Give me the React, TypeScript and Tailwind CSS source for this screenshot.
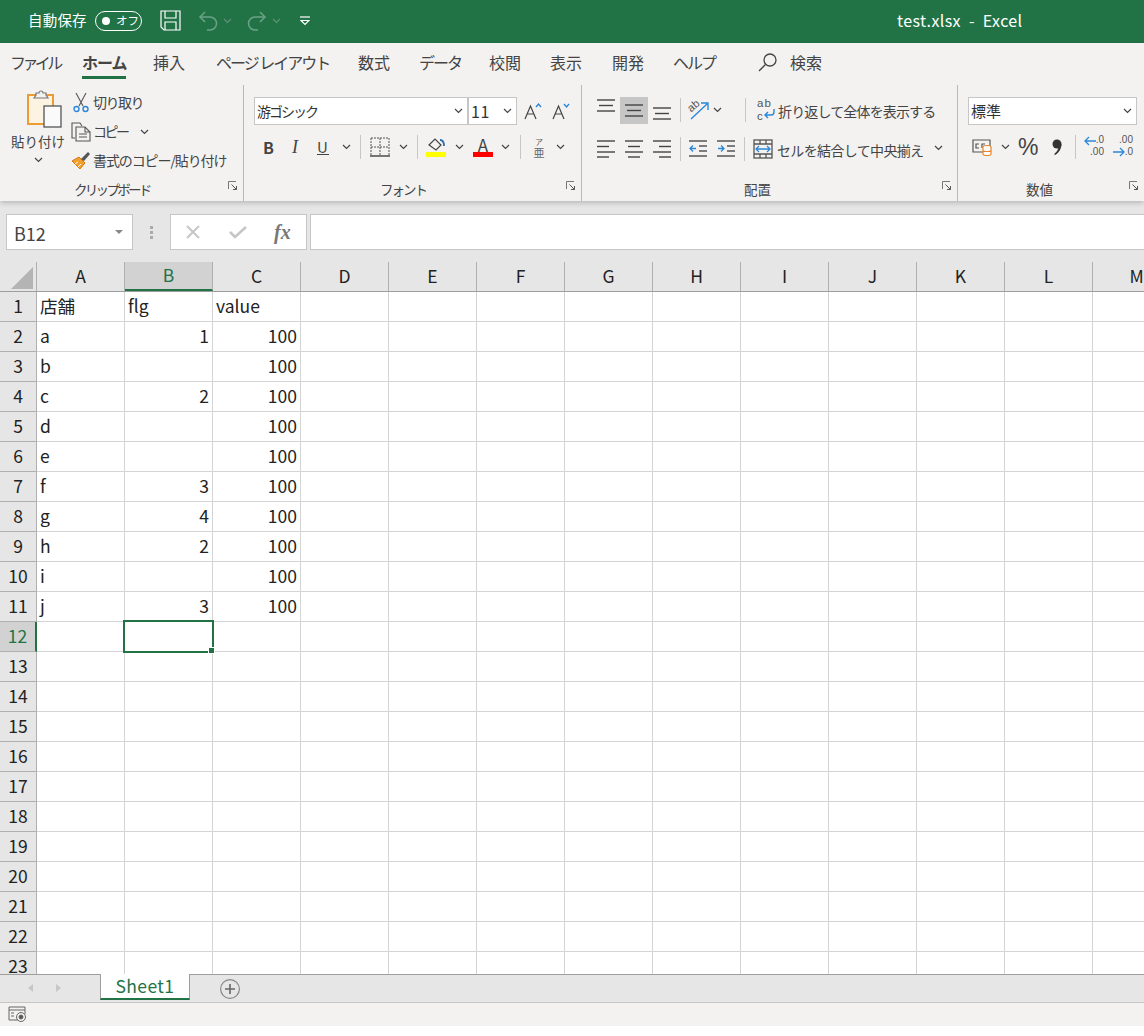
import React from 'react';

const font = { fontFamily: '"Noto Sans CJK JP", "Noto Sans", sans-serif' };
const decText = { fontFamily: '"Liberation Sans", sans-serif' };

const Chev = ({ className = '' }: { className?: string }) => (
    <svg width="9" height="6" viewBox="0 0 9 6" className={`shrink-0 ${className}`} fill="none" stroke="#444" strokeWidth="1.2">
        <path d="M1 1l3.5 3.5L8 1" />
    </svg>
);

const Sep = ({ className = '' }: { className?: string }) => <div className={`w-px bg-[#c6c6c6] shrink-0 ${className}`} />;

const Launcher = () => (
    <svg width="10" height="10" viewBox="0 0 10 10" className="absolute right-[5px] top-[2px]" fill="none" stroke="#777" strokeWidth="1">
        <path d="M.5 8V.5H8" />
        <path d="M3.5 3.5L8.5 8.5M5 8.5h3.5V5" stroke="#555" />
    </svg>
);

const Lines = ({ kind }: { kind: 'l' | 'c' | 'r' | 'f' }) => {
    const rows = kind === 'f'
        ? ['M0 2h18', 'M2 7.5h14', 'M0 13h18']
        : kind === 'l'
            ? ['M0 2h18', 'M0 7.5h12', 'M0 13h18', 'M0 18h12']
            : kind === 'c'
                ? ['M0 2h18', 'M3 7.5h12', 'M0 13h18', 'M3 18h12']
                : ['M0 2h18', 'M6 7.5h12', 'M0 13h18', 'M6 18h12'];
    return (
        <svg width="18" height="20" viewBox="0 0 18 20" className="shrink-0 block" fill="none" stroke="#444" strokeWidth="1.4">
            {rows.map((d) => <path key={d} d={d} />)}
        </svg>
    );
};

const TitleBar = () => (
    <div className="h-[43px] bg-[#217346] flex items-center text-white shrink-0 pl-[28px] pb-[2px]">
        <span className="text-[14.5px] w-[60px] whitespace-nowrap tracking-[0.2px] -mt-[2px]">自動保存</span>
        <div className="ml-[7px] w-[47px] h-[20px] rounded-full border border-white flex items-center pl-[6px]">
            <div className="w-[8px] h-[8px] rounded-full bg-white" />
            <span className="text-[11.5px] ml-[6px] leading-none">オフ</span>
        </div>
        <svg width="21" height="21" viewBox="0 0 21 21" className="ml-[18px]" fill="none" stroke="#fff" strokeWidth="1.2">
            <path d="M1 1h19v19H4l-3-3z" />
            <path d="M5 1v7h11V1M5 20v-8h11v8" />
        </svg>
        <svg width="21" height="20" viewBox="0 0 21 20" className="ml-[17px]" fill="none" stroke="#6ba288" strokeWidth="1.5">
            <path d="M7 1L2 6l5 5" />
            <path d="M2 6h10a6.5 6.5 0 0 1 0 13H9" />
        </svg>
        <Chev className="ml-[4px] opacity-40 invert" />
        <svg width="21" height="20" viewBox="0 0 21 20" className="ml-[14px]" fill="none" stroke="#6ba288" strokeWidth="1.5">
            <path d="M14 1l5 5-5 5" />
            <path d="M19 6H9a6.5 6.5 0 0 0 0 13h3" />
        </svg>
        <Chev className="ml-[5px] opacity-40 invert" />
        <svg width="10" height="10" viewBox="0 0 10 10" className="ml-[19px]" fill="none" stroke="#fff" strokeWidth="1.2">
            <path d="M0 1h10" />
            <path d="M1 4.5l4 4 4-4z" fill="#217346" />
        </svg>
        <span className="ml-[587px] text-[16px] whitespace-pre tracking-[0.4px] -mt-[2px]">test.xlsx  -  Excel</span>
    </div>
);

const tabs: [string, string][] = [
    ['ファイル', 'w-[47px] tracking-[-3.6px]'],
    ['挿入', 'w-[33px] ml-[27px]'],
    ['ページ レイアウト', 'w-[113px] ml-[30px] tracking-[-2px]'],
    ['数式', 'w-[33px] ml-[29px]'],
    ['データ', 'w-[42px] ml-[28px] tracking-[-2px]'],
    ['校閲', 'w-[33px] ml-[28px]'],
    ['表示', 'w-[33px] ml-[28px]'],
    ['開発', 'w-[33px] ml-[29px]'],
    ['ヘルプ', 'w-[42px] ml-[28px] tracking-[-2px]'],
];

const TabRow = () => (
    <div className="h-[42px] flex items-center pl-[10px] pb-[4px] text-[16px] text-[#444] shrink-0">
        {tabs.map(([label, cls], i) => (
            <React.Fragment key={label}>
                <span className={`${cls} whitespace-nowrap flex justify-start`}>{label}</span>
                {i === 0 && (
                    <span className="ml-[25px] w-[44px] flex justify-start font-bold text-[#444] whitespace-nowrap relative tracking-[-1px]">
                        ホーム
                        <span className="absolute left-0 right-0 -bottom-[5px] h-[3px] bg-[#217346]" />
                    </span>
                )}
            </React.Fragment>
        ))}
        <svg width="19" height="19" viewBox="0 0 19 19" className="ml-[43px]" fill="none" stroke="#444" strokeWidth="1.3">
            <circle cx="12" cy="7" r="6" />
            <path d="M7.5 11.5L1 18" />
        </svg>
        <span className="ml-[13px] w-[34px] whitespace-nowrap">検索</span>
    </div>
);

const GroupLabel = ({ text, cls }: { text: string; cls: string }) => (
    <div className="relative h-[20px] flex items-center text-[13.5px] text-[#444] mt-[2px]">
        <span className={`whitespace-nowrap ${cls}`}>{text}</span>
        <Launcher />
    </div>
);

const Clipboard = () => (
    <div className="relative w-[244px] h-[116px] border-r border-[#b8b8b8] shrink-0 text-[14px] text-[#444]">
        <div className="flex h-[92px]">
            <div className="w-[63px] ml-[12px] flex flex-col items-center">
                <svg width="36" height="39" viewBox="0 0 36 39" className="mt-[4px] ml-[3px]">
                    <rect x="1" y="6" width="25" height="29" fill="#fdf3e2" stroke="#ed9b33" strokeWidth="2" />
                    <path d="M9 6V4h3a2 2 0 0 1 4 0h3v2l2 3H7z" fill="#f3f2f1" stroke="#777" strokeWidth="1.2" />
                    <rect x="17" y="17" width="17" height="21" fill="#fafafa" stroke="#555" strokeWidth="1.3" />
                </svg>
                <span className="text-[13.5px] whitespace-nowrap mt-[3px] leading-[20px] -ml-[11px]">貼り付け</span>
                <Chev className="mt-[6px] -ml-[11px]" />
            </div>
            <div className="flex flex-col -ml-[4px] pt-[3px]">
                <div className="h-[29px] flex items-center">
                    <svg width="16" height="21" viewBox="0 0 16 21" className="ml-[2px]" fill="none" stroke="#555" strokeWidth="1.1">
                        <path d="M3 1l7 13M13 1L6 14" />
                        <circle cx="3.5" cy="17" r="2.5" stroke="#2b88d8" strokeWidth="1.4" />
                        <circle cx="12.5" cy="17" r="2.5" stroke="#2b88d8" strokeWidth="1.4" />
                    </svg>
                    <span className="ml-[4px] whitespace-nowrap tracking-[-1.5px]">切り取り</span>
                </div>
                <div className="h-[29px] flex items-center">
                    <svg width="21" height="20" viewBox="0 0 21 20" fill="none" stroke="#555" strokeWidth="1.1">
                        <path d="M4 16H1V1h8l2 3" />
                        <path d="M5 5h9l5 5v9H5z" fill="#f3f2f1" />
                        <path d="M14 5v5h5M8 12h8M8 15h8" />
                    </svg>
                    <span className="ml-[1px] whitespace-nowrap tracking-[-2.5px]">コピー</span>
                    <Chev className="ml-[12px]" />
                </div>
                <div className="h-[29px] flex items-center">
                    <svg width="20" height="19" viewBox="0 0 20 19">
                        <path d="M1 10l7-4 6 6-5 6z" fill="#f0a030" stroke="#d47a10" />
                        <path d="M4 13l3-2M7 16l3-3" stroke="#fff" strokeWidth="1" />
                        <path d="M10 8l7-7 2 2-6 7z" fill="#555" />
                    </svg>
                    <span className="ml-[2px] whitespace-nowrap tracking-[-1.1px]">書式のコピー/貼り付け</span>
                </div>
            </div>
        </div>
        <GroupLabel text="クリップボード" cls="ml-[74px] w-[74px] tracking-[-2.7px]" />
    </div>
);

const SelectBox = ({ label, cls, textCls = '' }: { label: string; cls: string; textCls?: string }) => (
    <div className={`h-[28px] bg-white border border-[#c6c6c6] flex items-center justify-between pl-[2px] pr-[4px] shrink-0 ${cls}`}>
        <span className={`text-[14px] text-[#333] whitespace-nowrap ${textCls}`}>{label}</span>
        <Chev />
    </div>
);

const FontGroup = () => (
    <div className="relative w-[338px] h-[116px] border-r border-[#b8b8b8] shrink-0 text-[#444]">
        <div className="h-[92px] pl-[10px]">
            <div className="flex items-center pt-[12px]">
                <SelectBox label="游ゴシック" cls="w-[214px]" textCls="tracking-[-2px]" />
                <SelectBox label="11" cls="w-[49px]" textCls="text-[16px] tracking-[0.5px]" />
                <svg width="18" height="18" viewBox="0 0 18 18" className="ml-[7px]" fill="none" stroke="#444" strokeWidth="1.2">
                    <path d="M1 17L6.5 4 12 17M3 12h7" />
                    <path d="M12 5l2.5-3L17 5" stroke="#2b88d8" strokeWidth="1.4" />
                </svg>
                <svg width="18" height="18" viewBox="0 0 18 18" className="ml-[10px]" fill="none" stroke="#444" strokeWidth="1.2">
                    <path d="M1 17L6.5 4 12 17M3 12h7" />
                    <path d="M12 2l2.5 3L17 2" stroke="#2b88d8" strokeWidth="1.4" />
                </svg>
            </div>
            <div className="flex items-center mt-[10px] h-[24px] text-[#444]">
                <span className="ml-[9px] w-[10px] font-bold text-[16px] leading-none">B</span>
                <span className="ml-[19px] w-[10px] italic text-[18px] leading-none" style={{ fontFamily: '"Liberation Serif", serif' }}>I</span>
                <span className="ml-[15px] w-[12px] text-[15px] leading-none border-b border-[#444]">U</span>
                <Chev className="ml-[13px]" />
                <Sep className="h-[24px] ml-[9px]" />
                <svg width="20" height="20" viewBox="0 0 20 20" className="ml-[9px]" fill="none" stroke="#555" strokeWidth="1" strokeDasharray="2 1">
                    <path d="M1 1h18M1 10h18M1 1v18M10 1v18M19 1v18" />
                    <path d="M0 19h20" strokeDasharray="none" strokeWidth="1.6" />
                </svg>
                <Chev className="ml-[9px]" />
                <Sep className="h-[24px] ml-[9px]" />
                <div className="ml-[8px] w-[20px] flex flex-col items-center">
                    <svg width="20" height="15" viewBox="0 0 20 15" fill="none" stroke="#444" strokeWidth="1.2">
                        <path d="M3 8l6-6 6 6-5 5z" />
                        <path d="M14 3c3 0 4 2 4 6" stroke="#2b6cb0" strokeWidth="1.8" />
                    </svg>
                    <div className="w-[20px] h-[5px] bg-[#ffff00]" />
                </div>
                <Chev className="ml-[9px]" />
                <div className="ml-[9px] w-[20px] flex flex-col items-center">
                    <span className="text-[17px] leading-[15px] h-[15px] text-[#444]">A</span>
                    <div className="w-[20px] h-[5px] bg-[#ff0000]" />
                </div>
                <Chev className="ml-[8px]" />
                <Sep className="h-[24px] ml-[10px]" />
                <div className="ml-[9px] w-[18px] flex flex-col items-center text-[#666] leading-none">
                    <span className="text-[8px] leading-[9px]">ア</span>
                    <span className="text-[11px] leading-[12px]">亜</span>
                </div>
                <Chev className="ml-[8px]" />
            </div>
        </div>
        <GroupLabel text="フォント" cls="ml-[136px] w-[46px] tracking-[-2px]" />
    </div>
);

const AlignGroup = () => (
    <div className="relative w-[376px] h-[116px] border-r border-[#b8b8b8] shrink-0 text-[#444]">
        <div className="h-[92px] pl-[15px]">
            <div className="flex items-start pt-[12px] h-[40px]">
                <div className="w-[18px] mt-[1px]"><Lines kind="f" /></div>
                <div className="ml-[5px] w-[28px] h-[27px] bg-[#c6c6c6] flex justify-center pt-[6px]"><Lines kind="f" /></div>
                <div className="ml-[5px] w-[18px] mt-[9px]"><Lines kind="f" /></div>
                <Sep className="h-[24px] ml-[9px] mt-[1px]" />
                <svg width="22" height="20" viewBox="0 0 22 20" className="ml-[7px] mt-[3px] overflow-visible" fill="none" stroke="#2b88d8" strokeWidth="1.4" style={decText}>
                    <path d="M3 19L19 4M13 3h7v7" />
                    <text x="1" y="11" transform="rotate(-40 4 9)" fontSize="11" fill="#555" stroke="none">ab</text>
                </svg>
                <Chev className="ml-[3px] mt-[10px]" />
                <Sep className="h-[24px] ml-[23px] mt-[1px]" />
                <svg width="19" height="24" viewBox="0 0 19 24" className="ml-[11px] overflow-visible" fill="none" stroke="#2b88d8" strokeWidth="1.4" style={decText}>
                    <text x="0" y="10" fontSize="11.5" letterSpacing="1" fill="#555" stroke="none">ab</text>
                    <text x="0" y="23" fontSize="11.5" fill="#555" stroke="none">c</text>
                    <path d="M17 12v3c0 2-1 3-3 3H8m3-3l-3 3 3 3" />
                </svg>
                <span className="ml-[2px] text-[14px] leading-[28px] whitespace-nowrap tracking-[-0.85px]">折り返して全体を表示する</span>
            </div>
            <div className="flex items-start mt-[14px] h-[30px]">
                <Lines kind="l" />
                <div className="ml-[10px]"><Lines kind="c" /></div>
                <div className="ml-[10px]"><Lines kind="r" /></div>
                <Sep className="h-[24px] ml-[9px] -mt-[2px]" />
                <svg width="18" height="18" viewBox="0 0 18 18" className="ml-[8px] mt-[1px]" fill="none" stroke="#555" strokeWidth="1.3">
                    <path d="M0 1h18M10 6h8M10 11h8M0 16h18" />
                    <path d="M7 8.5H1m3-3l-3 3 3 3" stroke="#2b88d8" />
                </svg>
                <svg width="18" height="18" viewBox="0 0 18 18" className="ml-[10px] mt-[1px]" fill="none" stroke="#555" strokeWidth="1.3">
                    <path d="M0 1h18M10 6h8M10 11h8M0 16h18" />
                    <path d="M1 8.5h6m-3-3l3 3-3 3" stroke="#2b88d8" />
                </svg>
                <Sep className="h-[24px] ml-[9px] -mt-[2px]" />
                <svg width="20" height="20" viewBox="0 0 20 20" className="ml-[8px]" fill="none" stroke="#555" strokeWidth="1.3">
                    <rect x="1" y="1" width="18" height="18" />
                    <path d="M1 5h18M1 15h18M7 1v4M13 1v4M7 15v4M13 15v4" />
                    <path d="M3 10h14M6 7l-3 3 3 3M14 7l3 3-3 3" stroke="#2b88d8" />
                </svg>
                <span className="ml-[4px] text-[14px] leading-[20px] whitespace-nowrap tracking-[-0.65px] mt-[1px]">セルを結合して中央揃え</span>
                <Chev className="ml-[11px] mt-[6px]" />
            </div>
        </div>
        <GroupLabel text="配置" cls="ml-[162px] w-[30px]" />
    </div>
);

const NumberGroup = () => (
    <div className="relative flex-1 h-[116px] text-[#444]">
        <div className="h-[92px] pl-[10px]">
            <div className="pt-[12px]">
                <SelectBox label="標準" cls="w-[169px]" textCls="text-[15px]" />
            </div>
            <div className="flex items-center mt-[10px] h-[24px]">
                <svg width="21" height="20" viewBox="0 0 21 20" className="ml-[4px]" fill="none" stroke="#555" strokeWidth="1.2">
                    <path d="M1 3h17v12H1z" />
                    <path d="M7 7H4v4h3M13 7h-3v4" />
                    <ellipse cx="15" cy="10" rx="4" ry="1.5" fill="#fff" stroke="#e8862e" />
                    <path d="M11 10v7c0 2 8 2 8 0v-7M11 13c0 2 8 2 8 0" stroke="#e8862e" fill="#fff" />
                </svg>
                <Chev className="ml-[8px]" />
                <span className="ml-[8px] text-[23px] leading-none w-[21px]" style={decText}>%</span>
                <svg width="10" height="17" viewBox="0 0 10 17" className="ml-[13px]" fill="#333">
                    <circle cx="5" cy="5" r="4.5" />
                    <path d="M9.5 5c0 5-3 9-6.5 11l-.8-1C5 13 6.5 10 6.5 7z" />
                </svg>
                <Sep className="h-[24px] ml-[13px]" />
                <div className="ml-[8px] w-[20px] relative h-[24px] text-[10px] leading-[10px] text-[#555]" style={decText}>
                    <svg width="12" height="10" viewBox="0 0 12 10" className="absolute left-0 top-[1px]" fill="none" stroke="#2b88d8" strokeWidth="1.3">
                        <path d="M12 5H1m4-4L1 5l4 4" />
                    </svg>
                    <span className="absolute right-0 top-0">.0</span>
                    <span className="absolute right-0 top-[12px]">.00</span>
                </div>
                <div className="ml-[9px] w-[20px] relative h-[24px] text-[10px] leading-[10px] text-[#555]" style={decText}>
                    <span className="absolute right-0 top-0">.00</span>
                    <svg width="12" height="10" viewBox="0 0 12 10" className="absolute left-0 top-[12px]" fill="none" stroke="#2b88d8" strokeWidth="1.3">
                        <path d="M0 5h11M7 1l4 4-4 4" />
                    </svg>
                    <span className="absolute right-0 top-[12px]">.0</span>
                </div>
            </div>
        </div>
        <GroupLabel text="数値" cls="ml-[68px] w-[30px]" />
    </div>
);

const FormulaBar = () => (
    <div className="h-[61px] bg-[#e6e6e6] flex items-start pt-[13px] pl-[6px] shrink-0">
        <div className="w-[127px] h-[36px] bg-white border border-[#c6c6c6] flex items-center justify-between pl-[7px] pr-[9px] shrink-0">
            <span className="text-[18px] text-[#444] pt-[2px]">B12</span>
            <div className="w-0 h-0 border-x-[4px] border-x-transparent border-t-[4px] border-t-[#888]" />
        </div>
        <div className="w-[37px] h-[36px] flex flex-col items-center justify-center gap-[2px] shrink-0">
            <div className="w-[3px] h-[3px] bg-[#aaa]" />
            <div className="w-[3px] h-[3px] bg-[#aaa]" />
            <div className="w-[3px] h-[3px] bg-[#aaa]" />
        </div>
        <div className="w-[137px] h-[36px] bg-white border border-[#c6c6c6] flex items-center pl-[14px] shrink-0">
            <svg width="16" height="16" viewBox="0 0 16 16" fill="none" stroke="#c6c6c6" strokeWidth="2">
                <path d="M2 2l12 12M14 2L2 14" />
            </svg>
            <svg width="18" height="14" viewBox="0 0 18 14" className="ml-[28px]" fill="none" stroke="#c6c6c6" strokeWidth="2.6">
                <path d="M1 7l5 5L17 2" />
            </svg>
            <span className="ml-[27px] text-[20px] font-bold italic text-[#777] leading-none" style={{ fontFamily: '"Liberation Serif", serif' }}>fx</span>
        </div>
        <div className="ml-[3px] flex-1 h-[36px] bg-white border border-[#c6c6c6] border-r-0" />
    </div>
);

const colLetters = ['A', 'B', 'C', 'D', 'E', 'F', 'G', 'H', 'I', 'J', 'K', 'L', 'M'];

const data: Record<number, [string, string, string]> = {
    1: ['店舗', 'flg', 'value'],
    2: ['a', '1', '100'],
    3: ['b', '', '100'],
    4: ['c', '2', '100'],
    5: ['d', '', '100'],
    6: ['e', '', '100'],
    7: ['f', '3', '100'],
    8: ['g', '4', '100'],
    9: ['h', '2', '100'],
    10: ['i', '', '100'],
    11: ['j', '3', '100'],
};

const Sheet = () => {
    const rows = Array.from({ length: 23 }, (_, i) => i + 1);
    return (
        <div className="flex-1 min-h-0 overflow-hidden bg-white text-[17.5px] text-[#222]">
            <div className="flex h-[30px] bg-[#e6e6e6] border-b border-[#9e9e9e]">
                <div className="w-[37px] shrink-0 border-r border-[#b0b0b0] relative">
                    <div className="absolute right-[3px] bottom-[2px] w-0 h-0 border-l-[22px] border-l-transparent border-b-[22px] border-b-[#b4b4b4]" />
                </div>
                {colLetters.map((c) => (
                    <div
                        key={c}
                        className={`w-[88px] shrink-0 flex items-center justify-center border-r border-[#b0b0b0] ${c === 'B' ? 'bg-[#d2d2d2] text-[#217346] border-b-2 border-b-[#217346]' : ''}`}
                    >
                        {c}
                    </div>
                ))}
            </div>
            {rows.map((r) => {
                const row = data[r];
                return (
                    <div key={r} className="flex h-[30px]">
                        <div
                            className={`w-[37px] shrink-0 flex items-center justify-center border-b border-[#b0b0b0] ${r === 12 ? 'bg-[#d2d2d2] text-[#217346] border-r-2 border-r-[#217346]' : 'bg-[#e6e6e6] border-r border-r-[#b0b0b0]'}`}
                        >
                            {r}
                        </div>
                        {colLetters.map((c, i) => {
                            const v = row && i < 3 ? row[i] : '';
                            const right = i > 0 && /^\d+$/.test(v);
                            return (
                                <div
                                    key={c}
                                    className={`relative w-[88px] shrink-0 flex items-center border-r border-b border-[#d4d4d4] whitespace-nowrap ${right ? 'justify-end pr-[3px]' : 'pl-[3px]'}`}
                                >
                                    {v}
                                    {r === 12 && c === 'B' && (
                                        <div className="absolute -left-[2px] -top-[2px] w-[91px] h-[33px] border-2 border-[#217346] z-10">
                                            <div className="absolute -right-[3px] -bottom-[3px] w-[7px] h-[7px] bg-[#217346] border border-white" />
                                        </div>
                                    )}
                                </div>
                            );
                        })}
                    </div>
                );
            })}
        </div>
    );
};

const SheetBar = () => (
    <div className="h-[29px] bg-[#e6e6e6] border-t border-[#9e9e9e] border-b border-b-[#c6c6c6] flex items-start shrink-0">
        <div className="w-0 h-0 ml-[28px] mt-[9px] border-y-[4px] border-y-transparent border-r-[5px] border-r-[#c6c6c6]" />
        <div className="w-0 h-0 ml-[23px] mt-[9px] border-y-[4px] border-y-transparent border-l-[5px] border-l-[#c6c6c6]" />
        <div className="ml-[39px] w-[88px] h-[24px] bg-white border-x border-[#9e9e9e] border-b-2 border-b-[#217346] flex items-center justify-center text-[17.5px] tracking-[0.4px] text-[#217346] -mt-px box-content">
            Sheet1
        </div>
        <svg width="20" height="20" viewBox="0 0 20 20" className="ml-[30px] mt-[4px]" fill="none" stroke="#888" strokeWidth="1.2">
            <circle cx="10" cy="10" r="9.4" />
            <path d="M5 10h10M10 5v10" stroke="#666" strokeWidth="1.6" />
        </svg>
    </div>
);

const StatusBar = () => (
    <div className="h-[23px] bg-[#f3f2f1] flex items-center pl-[8px] shrink-0">
        <svg width="19" height="17" viewBox="0 0 19 17" fill="none" stroke="#666" strokeWidth="1">
            <path d="M10 14H1V1h16v7" />
            <path d="M1 4h16M3 7h3M3 10h3" />
            <circle cx="13" cy="11" r="4.5" />
            <circle cx="13" cy="11" r="2" fill="#555" />
        </svg>
    </div>
);

const App: React.FC = () => (
    <div className="w-[1144px] h-[1036px] bg-white overflow-hidden flex flex-col" style={font}>
        <TitleBar />
        <div className="bg-[#f3f2f1] shrink-0 relative z-10 shadow-[0_2px_5px_rgba(0,0,0,0.2)] [font-feature-settings:'palt']">
            <TabRow />
            <div className="flex h-[116px]">
                <Clipboard />
                <FontGroup />
                <AlignGroup />
                <NumberGroup />
            </div>
        </div>
        <FormulaBar />
        <Sheet />
        <SheetBar />
        <StatusBar />
        <div className="h-[10px] bg-white shrink-0" />
    </div>
);

export default App;
